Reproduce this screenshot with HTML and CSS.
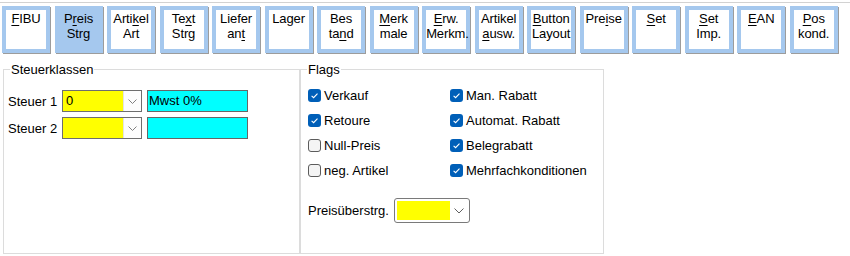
FILE: index.html
```html
<!DOCTYPE html>
<html>
<head>
<meta charset="utf-8">
<link rel="stylesheet" href="styles.css">
</head>
<body>
<div class="topline"></div>
<div class="toolbar">
  <div class="tb"><u>F</u>IBU</div>
  <div class="tb active">P<u>r</u>eis<br>Strg</div>
  <div class="tb">Arti<u>k</u>el<br>Art</div>
  <div class="tb">Te<u>x</u>t<br>Strg</div>
  <div class="tb">Liefer<br>an<u>t</u></div>
  <div class="tb">Lager</div>
  <div class="tb">Bes<br>ta<u>n</u>d</div>
  <div class="tb"><u>M</u>erk<br>male</div>
  <div class="tb"><u>E</u>rw.<br>Merkm.</div>
  <div class="tb">Artikel<br><u>a</u>usw.</div>
  <div class="tb"><u>B</u>utton<br>Layout</div>
  <div class="tb">Pre<u>i</u>se</div>
  <div class="tb"><u>S</u>et</div>
  <div class="tb"><u>S</u>et<br>Imp.</div>
  <div class="tb"><u>E</u>AN</div>
  <div class="tb"><u>P</u>os<br>kond.</div>
</div>
<div class="panels">
  <fieldset class="group steuer">
    <legend>Steuerklassen</legend>
    <div class="taxrows">
      <div class="taxrow">
        <span class="lbl">Steuer 1</span>
        <div class="combo"><span class="val">0</span><span class="dd"><svg width="9" height="5" viewBox="0 0 9 5"><path d="M0.5 0.5 L4.5 4.5 L8.5 0.5" fill="none" stroke="#808080" stroke-width="1"/></svg></span></div>
        <div class="cyan">Mwst 0%</div>
      </div>
      <div class="taxrow">
        <span class="lbl">Steuer 2</span>
        <div class="combo"><span class="val"></span><span class="dd"><svg width="9" height="5" viewBox="0 0 9 5"><path d="M0.5 0.5 L4.5 4.5 L8.5 0.5" fill="none" stroke="#808080" stroke-width="1"/></svg></span></div>
        <div class="cyan"></div>
      </div>
    </div>
  </fieldset>
  <fieldset class="group flags">
    <legend>Flags</legend>
    <div class="flaggrid">
      <label class="cb"><svg class="box" width="13" height="13" viewBox="0 0 13 13"><rect width="13" height="13" rx="3" fill="#005fb8"/><path d="M3.6 6.8 L5.6 8.7 L9.5 4.6" fill="none" stroke="#fff" stroke-width="1.1"/></svg>Verkauf</label>
      <label class="cb"><svg class="box" width="13" height="13" viewBox="0 0 13 13"><rect width="13" height="13" rx="3" fill="#005fb8"/><path d="M3.6 6.8 L5.6 8.7 L9.5 4.6" fill="none" stroke="#fff" stroke-width="1.1"/></svg>Man. Rabatt</label>
      <label class="cb"><svg class="box" width="13" height="13" viewBox="0 0 13 13"><rect width="13" height="13" rx="3" fill="#005fb8"/><path d="M3.6 6.8 L5.6 8.7 L9.5 4.6" fill="none" stroke="#fff" stroke-width="1.1"/></svg>Retoure</label>
      <label class="cb"><svg class="box" width="13" height="13" viewBox="0 0 13 13"><rect width="13" height="13" rx="3" fill="#005fb8"/><path d="M3.6 6.8 L5.6 8.7 L9.5 4.6" fill="none" stroke="#fff" stroke-width="1.1"/></svg>Automat. Rabatt</label>
      <label class="cb"><svg class="box" width="13" height="13" viewBox="0 0 13 13"><rect x="0.5" y="0.5" width="12" height="12" rx="2.5" fill="#f4f4f4" stroke="#5c5c5c"/></svg>Null-Preis</label>
      <label class="cb"><svg class="box" width="13" height="13" viewBox="0 0 13 13"><rect width="13" height="13" rx="3" fill="#005fb8"/><path d="M3.6 6.8 L5.6 8.7 L9.5 4.6" fill="none" stroke="#fff" stroke-width="1.1"/></svg>Belegrabatt</label>
      <label class="cb"><svg class="box" width="13" height="13" viewBox="0 0 13 13"><rect x="0.5" y="0.5" width="12" height="12" rx="2.5" fill="#f4f4f4" stroke="#5c5c5c"/></svg>neg. Artikel</label>
      <label class="cb"><svg class="box" width="13" height="13" viewBox="0 0 13 13"><rect width="13" height="13" rx="3" fill="#005fb8"/><path d="M3.6 6.8 L5.6 8.7 L9.5 4.6" fill="none" stroke="#fff" stroke-width="1.1"/></svg>Mehrfachkonditionen</label>
    </div>
    <div class="prow">
      <span class="plbl">Preisüberstrg.</span>
      <div class="combo2"><span class="yel"></span><span class="dd2"><svg width="10" height="6" viewBox="0 0 10 6"><path d="M0.5 0.5 L5 5 L9.5 0.5" fill="none" stroke="#606060" stroke-width="1"/></svg></span></div>
    </div>
  </fieldset>
</div>
</body>
</html>
```

FILE: styles.css
```css
html, body {
  margin: 0;
  padding: 0;
  background: #ffffff;
  font-family: "Liberation Sans", Arial, sans-serif;
  font-size: 13px;
  color: #000;
}

.topline {
  margin-top: 2px;
  height: 1px;
  background: #d2d2d2;
}

.toolbar {
  display: flex;
  gap: 4.53px;
  margin-top: 3px;
  padding-left: 2px;
}

.tb {
  box-sizing: border-box;
  width: 48px;
  height: 47px;
  flex: none;
  border: 4px solid #a5c8ee;
  box-shadow: 1px 1px 0 #9c9c9c;
  background: #ffffff;
  text-align: center;
  line-height: 15px;
  padding-top: 1px;
  white-space: nowrap;
  letter-spacing: -0.1px;
}

.tb.active {
  background: #a5c8ee;
}

.tb u {
  text-underline-offset: 2px;
}

.panels {
  display: flex;
  margin-top: 9px;
  padding-left: 3px;
}

.group {
  box-sizing: border-box;
  margin: 0;
  padding: 0;
  height: 192px;
  border: 1px solid #dcdcdc;
  min-width: 0;
}

.group legend {
  margin-left: 6px;
  padding: 0 1px;
  line-height: 15px;
}

.steuer {
  width: 297px;
}

.flags {
  width: 304px;
}

.taxrows {
  display: flex;
  flex-direction: column;
  gap: 5px;
  padding: 13px 0 0 4px;
}

.taxrow {
  display: flex;
  align-items: center;
  height: 22px;
}

.lbl {
  width: 54px;
  flex: none;
}

.combo {
  box-sizing: border-box;
  width: 80px;
  height: 22px;
  border: 1px solid #6e6e6e;
  display: flex;
}

.combo .val {
  flex: 1;
  background: #ffff00;
  padding-left: 3px;
  line-height: 20px;
}

.combo .dd {
  width: 17px;
  flex: none;
  background: #fdfdfd;
  border-left: 1px solid #e3e3e3;
  display: flex;
  align-items: center;
  justify-content: center;
}

.cyan {
  box-sizing: border-box;
  width: 101px;
  height: 22px;
  margin-left: 5px;
  border: 1px solid #666666;
  background: #00ffff;
  padding-left: 1px;
  line-height: 20px;
}

.flaggrid {
  display: grid;
  grid-template-columns: 142px auto;
  grid-auto-rows: 25px;
  padding: 6px 0 0 7px;
}

.cb {
  display: flex;
  align-items: center;
  white-space: nowrap;
}

.cb .box {
  flex: none;
  margin-right: 3px;
}

.prow {
  display: flex;
  align-items: center;
  margin-top: 15px;
  padding-left: 7px;
}

.plbl {
  margin-right: 5px;
}

.combo2 {
  box-sizing: border-box;
  width: 76px;
  height: 25px;
  border: 1px solid #7a7a7a;
  border-radius: 3px;
  padding: 2px;
  display: flex;
}

.combo2 .yel {
  width: 53px;
  background: #ffff00;
}

.combo2 .dd2 {
  flex: 1;
  display: flex;
  align-items: center;
  justify-content: center;
  padding-left: 2px;
}
```
